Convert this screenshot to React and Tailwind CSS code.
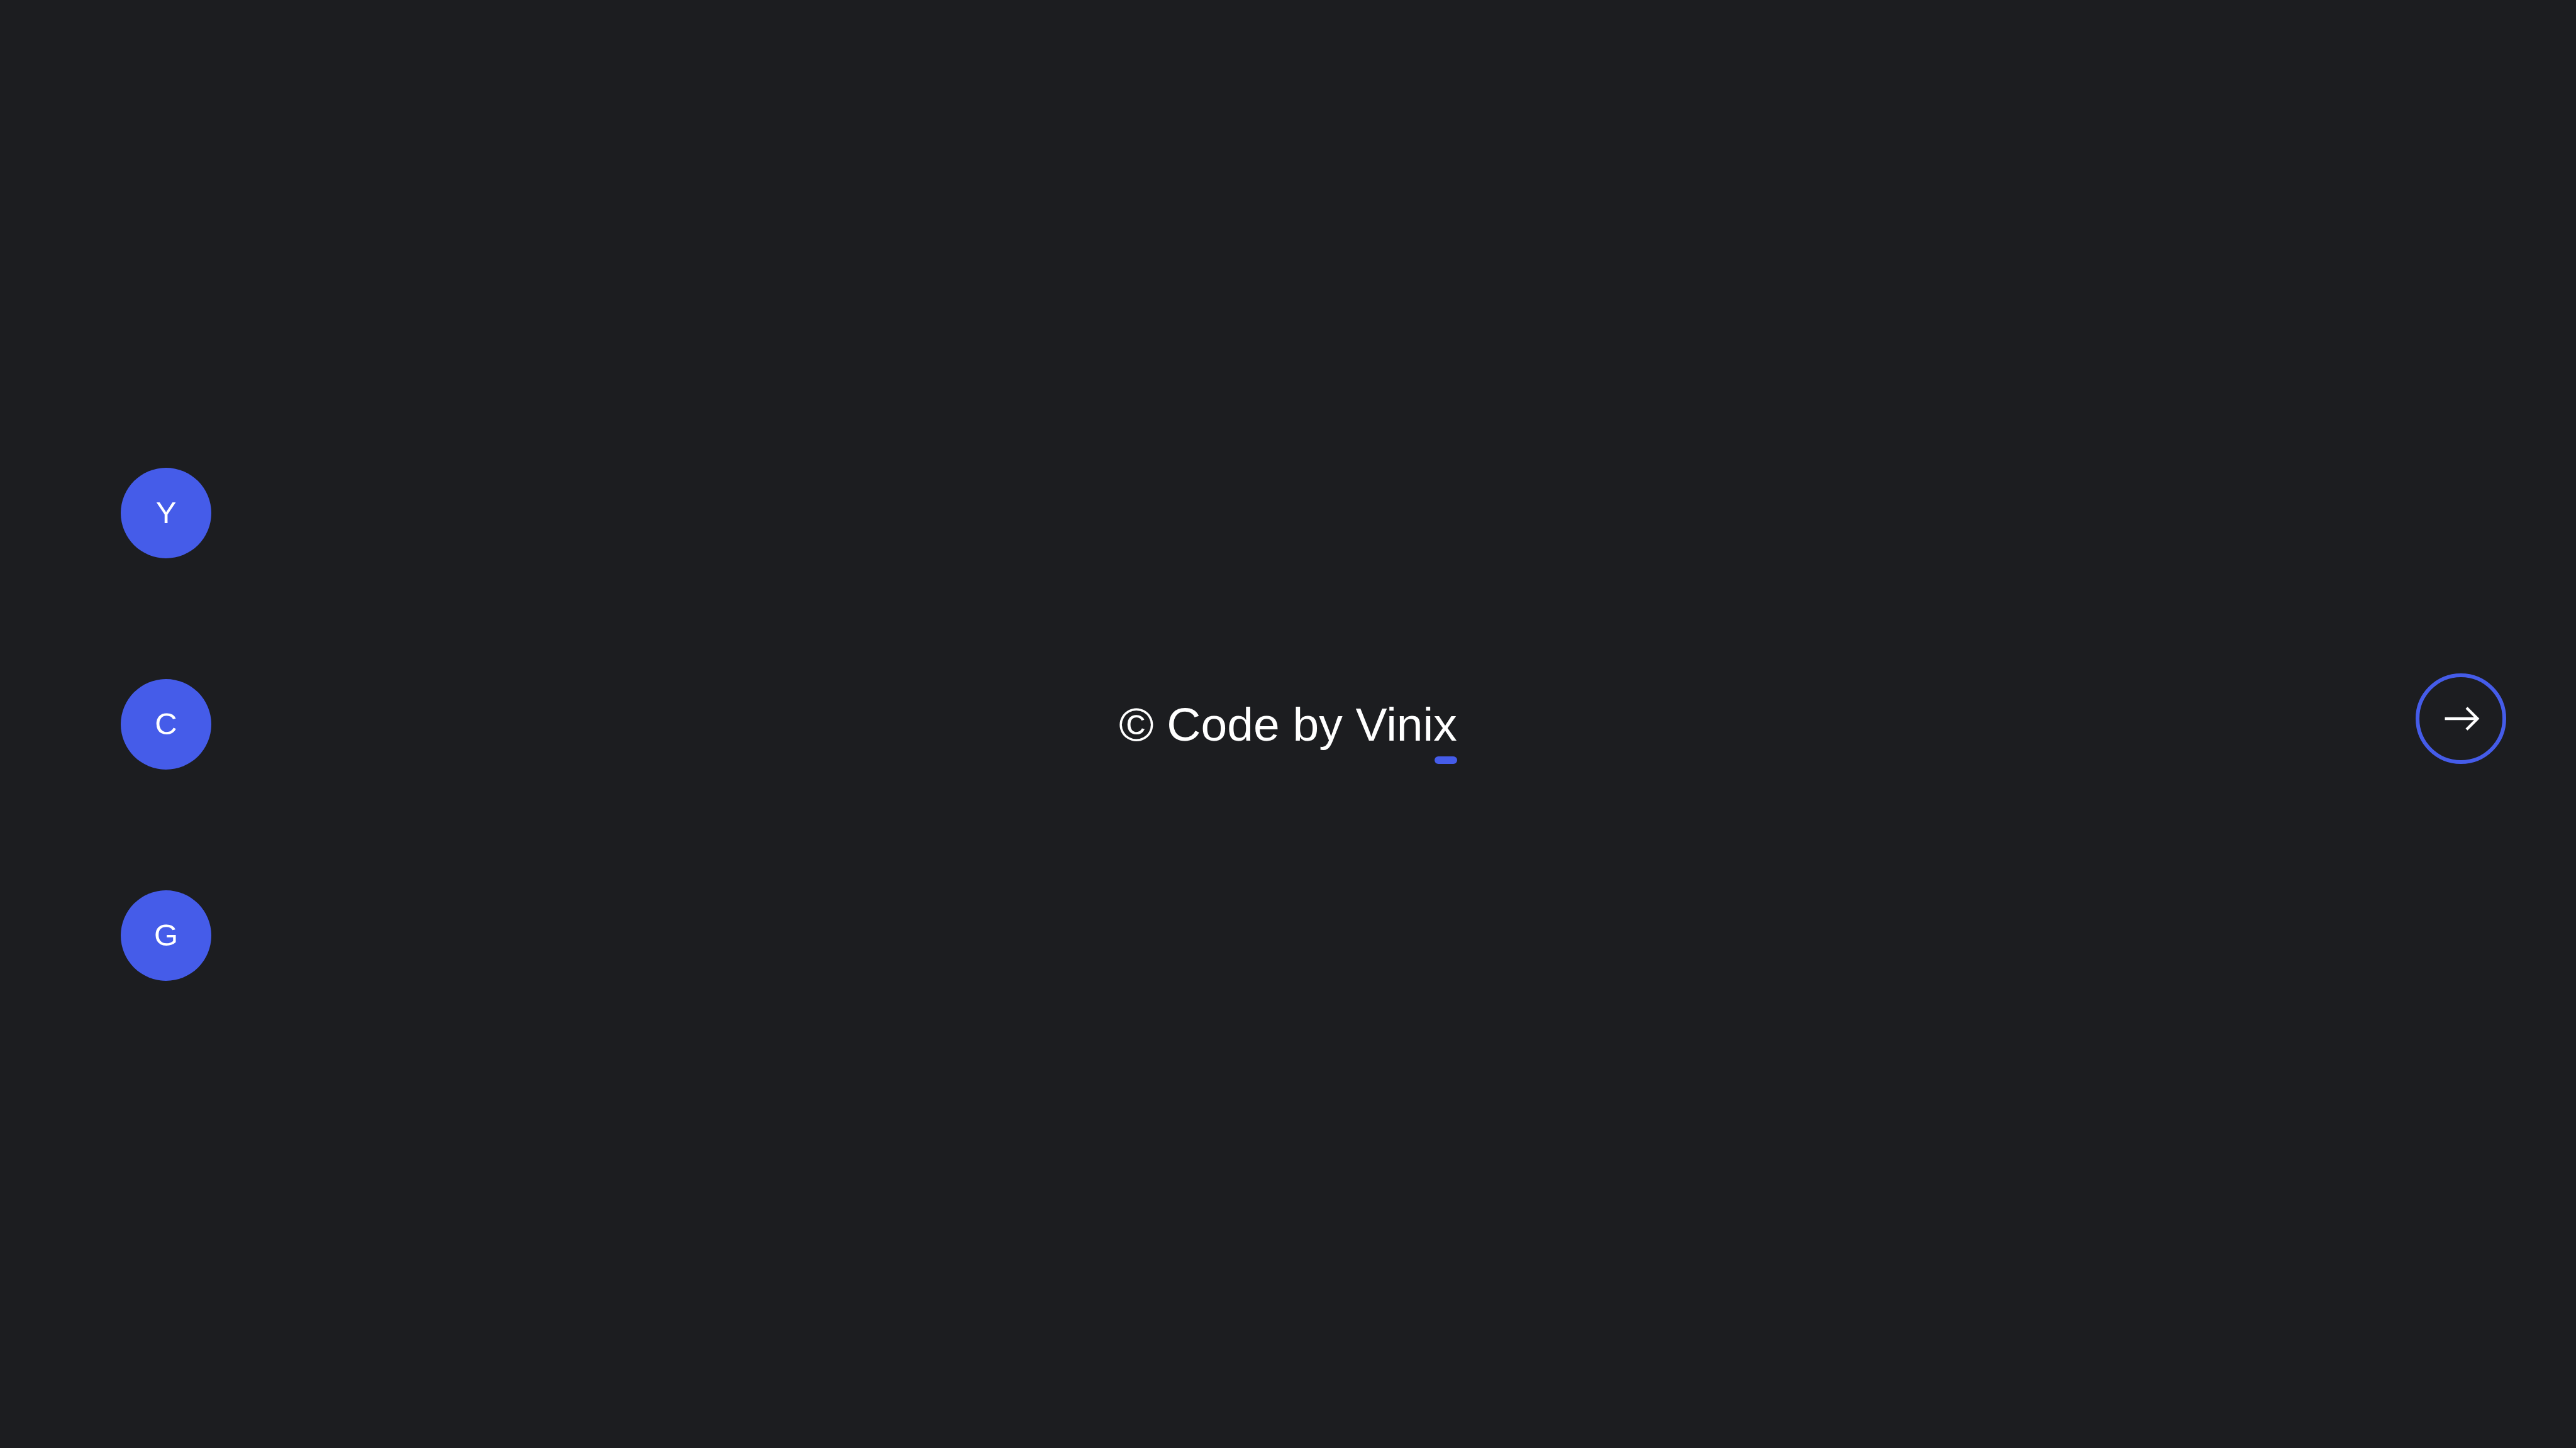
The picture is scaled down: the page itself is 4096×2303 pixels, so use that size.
const links = [
  { label: "Y", href: "#y" },
  { label: "C", href: "#c" },
  { label: "G", href: "#g" },
];

function ArrowRight() {
  return (
    <svg
      viewBox="0 0 192 192"
      fill="none"
      stroke="currentColor"
      strokeWidth="6"
      className="size-36 shrink-0"
      aria-hidden="true"
    >
      <path d="M62 96H130" />
      <path d="M108 73L131 96L108 119" />
    </svg>
  );
}

export default function App() {
  return (
    <main className="grid min-h-screen grid-cols-[1fr_auto_1fr] items-center bg-[#1c1d20] font-['Liberation_Sans',Arial,sans-serif] text-white">
      <nav aria-label="Sections" className="flex flex-col items-start gap-48 pl-48">
        {links.map(({ label, href }) => (
          <a
            key={label}
            href={href}
            className="flex size-36 items-center justify-center rounded-full bg-[#455ce9] text-[49px] leading-none"
          >
            {label}
          </a>
        ))}
      </nav>
      <a href="#vinix" className="relative text-[75px] leading-[126px] whitespace-nowrap">
        © Code by Vinix
        <span className="absolute right-0 bottom-0 h-3 w-9 rounded-full bg-[#455ce9]" />
      </a>
      <div className="flex justify-end pr-[111px] pb-[18px]">
        <button
          type="button"
          aria-label="Next"
          className="flex size-36 items-center justify-center rounded-full border-6 border-[#455ce9]"
        >
          <ArrowRight />
        </button>
      </div>
    </main>
  );
}
